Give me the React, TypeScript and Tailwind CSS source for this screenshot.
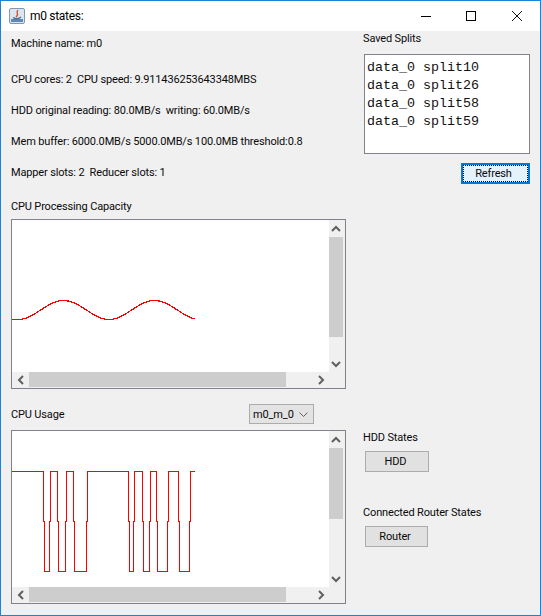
const splits = ['data_0 split10', 'data_0 split26', 'data_0 split58', 'data_0 split59']

// capacity curve, one point per pixel
const sinePoints = Array.from({ length: 184 }, (_, x) => {
    const y = x < 10 ? 99.5 : 90 + 9.5 * Math.cos((2 * Math.PI * (x - 6)) / 91)
    return `${x},${y.toFixed(1)}`
}).join(' ')

const usageXs = [
    31.5, 32.5, 37.5, 38.5, 45.5, 46.5, 53.5, 54.5, 61.5, 62.5, 74.5, 75.5, 116.5, 117.5, 121.5, 122.5,
    130.5, 131.5, 137.5, 138.5, 144.5, 145.5, 155.5, 156.5, 166.5, 167.5, 177.5, 178.5,
]

// square wave: each step drops or rises through the mid line with a 1px jog
function usagePoints() {
    const pts = ['0,40.5']
    for (let i = 0; i < usageXs.length; i += 4) {
        const [a, b, c, d] = usageXs.slice(i, i + 4)
        pts.push(`${a},40.5`, `${a},90`, `${b},90`, `${b},140.5`, `${c},140.5`, `${c},90`, `${d},90`, `${d},40.5`)
    }
    pts.push('183,40.5')
    return pts.join(' ')
}

function Arrow({ dir }: { dir: 'up' | 'down' | 'left' | 'right' }) {
    const d = {
        up: 'M1 6 L5 2 L9 6',
        down: 'M1 2 L5 6 L9 2',
        left: 'M6 1 L2 5 L6 9',
        right: 'M2 1 L6 5 L2 9',
    }[dir]
    const box = dir === 'up' || dir === 'down' ? 'w-[10px] h-[8px]' : 'w-[8px] h-[10px]'
    return (
        <svg className={box} viewBox={dir === 'up' || dir === 'down' ? '0 0 10 8' : '0 0 8 10'} fill="none">
            <path d={d} stroke="#606060" strokeWidth="2" />
        </svg>
    )
}

function ChartPane({ height, thumb, children }: { height: string; thumb: string; children: React.ReactNode }) {
    return (
        <div className={`flex w-[335px] flex-col border border-[#82828c] bg-[#f0f0f0] ${height}`}>
            <div className="flex min-h-0 flex-1">
                <div className="w-[317px] bg-white">{children}</div>
                <div className="flex w-[17px] flex-col items-center pr-[2px]">
                    <div className="flex h-[17px] w-full items-center justify-center"><Arrow dir="up" /></div>
                    <div className={`w-full bg-[#cdcdcd] ${thumb}`} />
                    <div className="mt-auto flex h-[17px] w-full items-center justify-center"><Arrow dir="down" /></div>
                </div>
            </div>
            <div className="flex h-[16px] w-[317px] items-center pb-[1px]">
                <div className="flex h-full w-[17px] items-center justify-center"><Arrow dir="left" /></div>
                <div className="h-full w-[257px] bg-[#cdcdcd]" />
                <div className="ml-auto flex h-full w-[17px] items-center justify-center"><Arrow dir="right" /></div>
            </div>
        </div>
    )
}

function InfoRow({ className, children }: { className: string; children: React.ReactNode }) {
    return <div className={`flex h-[20px] items-center pt-[3px] whitespace-pre ${className}`}>{children}</div>
}

export default function App() {
    return (
        <div className="flex h-[616px] w-[541px] flex-col overflow-hidden border border-[#1883d7] bg-[#f0f0f0] font-['Roboto',sans-serif] text-[11px] tracking-[-0.15px] text-[#0a0a0a]">
            {/* Title bar */}
            <div className="flex h-[30px] items-center bg-white">
                <svg className="ml-[8px] h-[16px] w-[16px]" viewBox="0 0 16 16">
                    <rect x="0.5" y="0.5" width="15" height="15" rx="1.5" fill="#dbe6f0" stroke="#7f97b0" />
                    <rect x="2" y="11" width="12" height="3" fill="#5f88ad" />
                    <path d="M9 2 C6 5 11 6 7 9" fill="none" stroke="#d9552b" strokeWidth="1.4" />
                    <path d="M4 9.5 C6 11 10 11 12 9" fill="none" stroke="#3f6d96" strokeWidth="1.2" />
                </svg>
                <span className="ml-[5px] text-[12px] tracking-[-0.3px] text-black">m0 states:</span>
                <div className="ml-auto flex items-center">
                    <div className="h-px w-[10px] bg-black" />
                    <div className="ml-[35px] h-[10px] w-[10px] border border-black" />
                    <svg className="mr-[18px] ml-[36px] h-[10px] w-[10px]" viewBox="0 0 10 10">
                        <path d="M0 0 L10 10 M10 0 L0 10" stroke="#111" strokeWidth="1" />
                    </svg>
                </div>
            </div>

            <div className="flex">
                {/* Left column */}
                <div className="ml-[10px] flex w-[335px] flex-col">
                    <InfoRow className="mt-[2px]">Machine name: m0</InfoRow>
                    <InfoRow className="mt-[16px]">CPU cores: 2  CPU speed: 9.911436253643348MBS</InfoRow>
                    <InfoRow className="mt-[11px]">HDD original reading: 80.0MB/s  writing: 60.0MB/s</InfoRow>
                    <InfoRow className="mt-[11px]">Mem buffer: 6000.0MB/s 5000.0MB/s 100.0MB threshold:0.8</InfoRow>
                    <InfoRow className="mt-[11px]">Mapper slots: 2  Reducer slots: 1</InfoRow>
                    <InfoRow className="mt-[14px]">CPU Processing Capacity</InfoRow>
                    <div className="mt-[3px]">
                        <ChartPane height="h-[170px]" thumb="h-[100px]">
                            <svg className="h-[151px] w-[317px]" viewBox="0 0 317 151" shapeRendering="crispEdges">
                                <polyline points={sinePoints} fill="none" stroke="#ff0000" strokeWidth="1.2" />
                            </svg>
                        </ChartPane>
                    </div>
                    <div className="mt-[15px] flex h-[20px] items-center">
                        <span className="w-[238px] pt-[3px]">CPU Usage</span>
                        <div className="flex h-[20px] w-[65px] items-center border border-[#acacac] bg-[#e3e3e3] pl-[3px]">
                            <span className="w-[46px] pt-[3px]">m0_m_0</span>
                            <svg className="h-[5px] w-[9px]" viewBox="0 0 9 5" fill="none">
                                <path d="M0.5 0.5 L4.5 4.5 L8.5 0.5" stroke="#606060" strokeWidth="1" />
                            </svg>
                        </div>
                    </div>
                    <div className="mt-[6px]">
                        <ChartPane height="h-[174px]" thumb="h-[71px]">
                            <svg className="h-[155px] w-[317px]" viewBox="0 0 317 155" shapeRendering="crispEdges">
                                <polyline points={usagePoints()} fill="none" stroke="#ff0000" strokeWidth="1" />
                            </svg>
                        </ChartPane>
                    </div>
                </div>

                {/* Right column */}
                <div className="ml-[17px] flex w-[167px] flex-col">
                    <div className="flex h-[14px] items-center pt-[3px]">Saved Splits</div>
                    <div className="mt-[9px] ml-px flex h-[100px] w-[166px] flex-col border border-[#82828c] bg-white pt-[4px] pl-[2px] font-['Liberation_Mono',monospace] text-[13.33px] leading-[18px] tracking-normal text-[#111]">
                        {splits.map((s) => (
                            <div key={s}>{s}</div>
                        ))}
                    </div>
                    <div className="mt-[9px] flex justify-end">
                        <button className="h-[21px] w-[69px] border-2 border-[#0078d7] bg-[#e5f1fb] p-0 pt-px pr-[4px] outline-1 -outline-offset-3 outline-black outline-dotted">
                            Refresh
                        </button>
                    </div>
                    <div className="mt-[246px] flex h-[14px] items-center pt-[3px]">HDD States</div>
                    <button className="mt-[7px] ml-[2px] h-[21px] w-[64px] border border-[#acacac] bg-[#e1e1e1] pt-px pr-[3px]">HDD</button>
                    <div className="mt-[33px] flex h-[14px] items-center pt-[3px]">Connected Router States</div>
                    <button className="mt-[7px] ml-[2px] h-[21px] w-[63px] border border-[#acacac] bg-[#e1e1e1] pt-px pr-[3px]">Router</button>
                </div>
            </div>
        </div>
    )
}
